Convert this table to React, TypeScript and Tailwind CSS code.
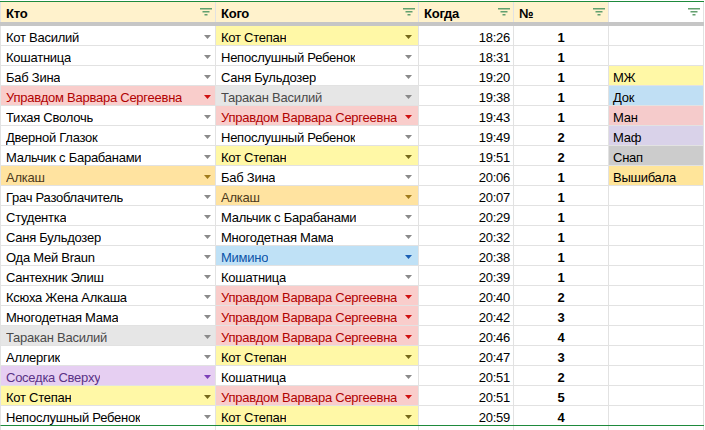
type Tone = "w" | "y" | "r" | "g" | "o" | "b" | "p";

const tones: Record<Tone, { cell: string; arrow: string }> = {
  w: { cell: "bg-white text-black", arrow: "#8a8a8a" },
  y: { cell: "bg-[#fff8a6] text-black", arrow: "#75681a" },
  r: { cell: "bg-[#f9cdcb] text-[#b10202]", arrow: "#d01010" },
  g: { cell: "bg-[#e6e6e6] text-[#4a4a4a]", arrow: "#8a8a8a" },
  o: { cell: "bg-[#ffe3a0] text-[#4d3a1c]", arrow: "#a17b1b" },
  b: { cell: "bg-[#bfe1f6] text-[#0a53a8]", arrow: "#1a5fb4" },
  p: { cell: "bg-[#e6cff2] text-[#5a3286]", arrow: "#7b3fb8" },
};

const legendBg: Record<string, string> = {
  МЖ: "bg-[#fff8a6]",
  Док: "bg-[#c0dff4]",
  Ман: "bg-[#f5cbcb]",
  Маф: "bg-[#d9d2e9]",
  Снап: "bg-[#cccccc]",
  Вышибала: "bg-[#ffe59a]",
};

type Row = [string, Tone, string, Tone, string, number, string?];

const rows: Row[] = [
  ["Кот Василий", "w", "Кот Степан", "y", "18:26", 1],
  ["Кошатница", "w", "Непослушный Ребенок", "w", "18:31", 1],
  ["Баб Зина", "w", "Саня Бульдозер", "w", "19:20", 1, "МЖ"],
  ["Управдом Варвара Сергеевна", "r", "Таракан Василий", "g", "19:38", 1, "Док"],
  ["Тихая Сволочь", "w", "Управдом Варвара Сергеевна", "r", "19:43", 1, "Ман"],
  ["Дверной Глазок", "w", "Непослушный Ребенок", "w", "19:49", 2, "Маф"],
  ["Мальчик с Барабанами", "w", "Кот Степан", "y", "19:51", 2, "Снап"],
  ["Алкаш", "o", "Баб Зина", "w", "20:06", 1, "Вышибала"],
  ["Грач Разоблачитель", "w", "Алкаш", "o", "20:07", 1],
  ["Студентка", "w", "Мальчик с Барабанами", "w", "20:29", 1],
  ["Саня Бульдозер", "w", "Многодетная Мама", "w", "20:32", 1],
  ["Ода Мей Braun", "w", "Мимино", "b", "20:38", 1],
  ["Сантехник Элиш", "w", "Кошатница", "w", "20:39", 1],
  ["Ксюха Жена Алкаша", "w", "Управдом Варвара Сергеевна", "r", "20:40", 2],
  ["Многодетная Мама", "w", "Управдом Варвара Сергеевна", "r", "20:42", 3],
  ["Таракан Василий", "g", "Управдом Варвара Сергеевна", "r", "20:46", 4],
  ["Аллергик", "w", "Кот Степан", "y", "20:47", 3],
  ["Соседка Сверху", "p", "Кошатница", "w", "20:51", 2],
  ["Кот Степан", "y", "Управдом Варвара Сергеевна", "r", "20:51", 5],
  ["Непослушный Ребенок", "w", "Кот Степан", "y", "20:59", 4],
];

const cols = "grid grid-cols-[215px_203px_95px_95px_95px]";

const FilterIcon = () => (
  <svg width="12" height="8" viewBox="0 0 12 8" className="self-center mb-[-1px] shrink-0">
    <rect x="0" y="0" width="12" height="1.5" fill="#62a06e" />
    <rect x="2.5" y="3" width="7" height="1.5" fill="#62a06e" />
    <rect x="4.5" y="6" width="3" height="1.5" fill="#62a06e" />
  </svg>
);

const Arrow = ({ color }: { color: string }) => (
  <svg width="7" height="4" viewBox="0 0 7 4" className="self-center mt-[2px] shrink-0">
    <path d="M0 0h7L3.5 4z" fill={color} />
  </svg>
);

const Chip = ({ text, tone, pr }: { text: string; tone: Tone; pr: string }) => (
  <div className={`flex items-end justify-between gap-1 pl-[5px] ${pr} border-r border-[#e2e2e2] ${tones[tone].cell}`}>
    <span className="whitespace-nowrap overflow-hidden">{text}</span>
    <Arrow color={tones[tone].arrow} />
  </div>
);

const HeadCell = ({ label, bg }: { label: string; bg: string }) => (
  <div className={`flex items-end justify-between pl-[5px] pr-[3px] pb-px font-bold border-r border-[#e2e2e2] ${bg}`}>
    <span>{label}</span>
    <FilterIcon />
  </div>
);

export default function App() {
  return (
    <div className="w-[705px] h-[430px] overflow-hidden bg-white text-[13px] leading-[15px] tracking-[-0.25px] text-black font-['Liberation_Sans',Arial,sans-serif]">
      <div className="w-[704px] border-t border-white">
        <div className="h-px bg-[#1e8a3c]" />
        {/* header */}
        <div className={`${cols} h-[20px] border-l border-[#e2e2e2]`}>
          <HeadCell label="Кто" bg="bg-[#fff2cc]" />
          <HeadCell label="Кого" bg="bg-[#fff2cc]" />
          <HeadCell label="Когда" bg="bg-[#fff2cc]" />
          <HeadCell label="№" bg="bg-[#fff2cc]" />
          <HeadCell label="" bg="bg-white" />
        </div>
        <div className="h-[4px] bg-[#c6c6c6]" />

        {/* data */}
        {rows.map(([who, wt, whom, mt, time, n, legend], i) => (
          <div
            key={i}
            className={`${cols} h-[20px] border-l border-[#e2e2e2] border-b ${
              i === rows.length - 1 ? "border-b-[#1e8a3c]" : "border-b-[#e2e2e2]"
            }`}
          >
            <Chip text={who} tone={wt} pr="pr-[4px]" />
            <Chip text={whom} tone={mt} pr="pr-[6px]" />
            <div className="flex items-end justify-end pr-[3px] border-r border-[#e2e2e2]">{time}</div>
            <div className="flex items-end justify-center font-bold border-r border-[#e2e2e2]">{n}</div>
            <div
              className={`flex items-end pl-[4px] border-r border-[#e2e2e2] ${
                legend ? legendBg[legend] : "bg-white"
              }`}
            >
              {legend ?? ""}
            </div>
          </div>
        ))}

        {/* start of next row */}
        <div className={`${cols} h-[10px] border-l border-[#e2e2e2]`}>
          {[0, 1, 2, 3, 4].map((k) => (
            <div key={k} className="border-r border-[#e2e2e2]" />
          ))}
        </div>
      </div>
    </div>
  );
}
